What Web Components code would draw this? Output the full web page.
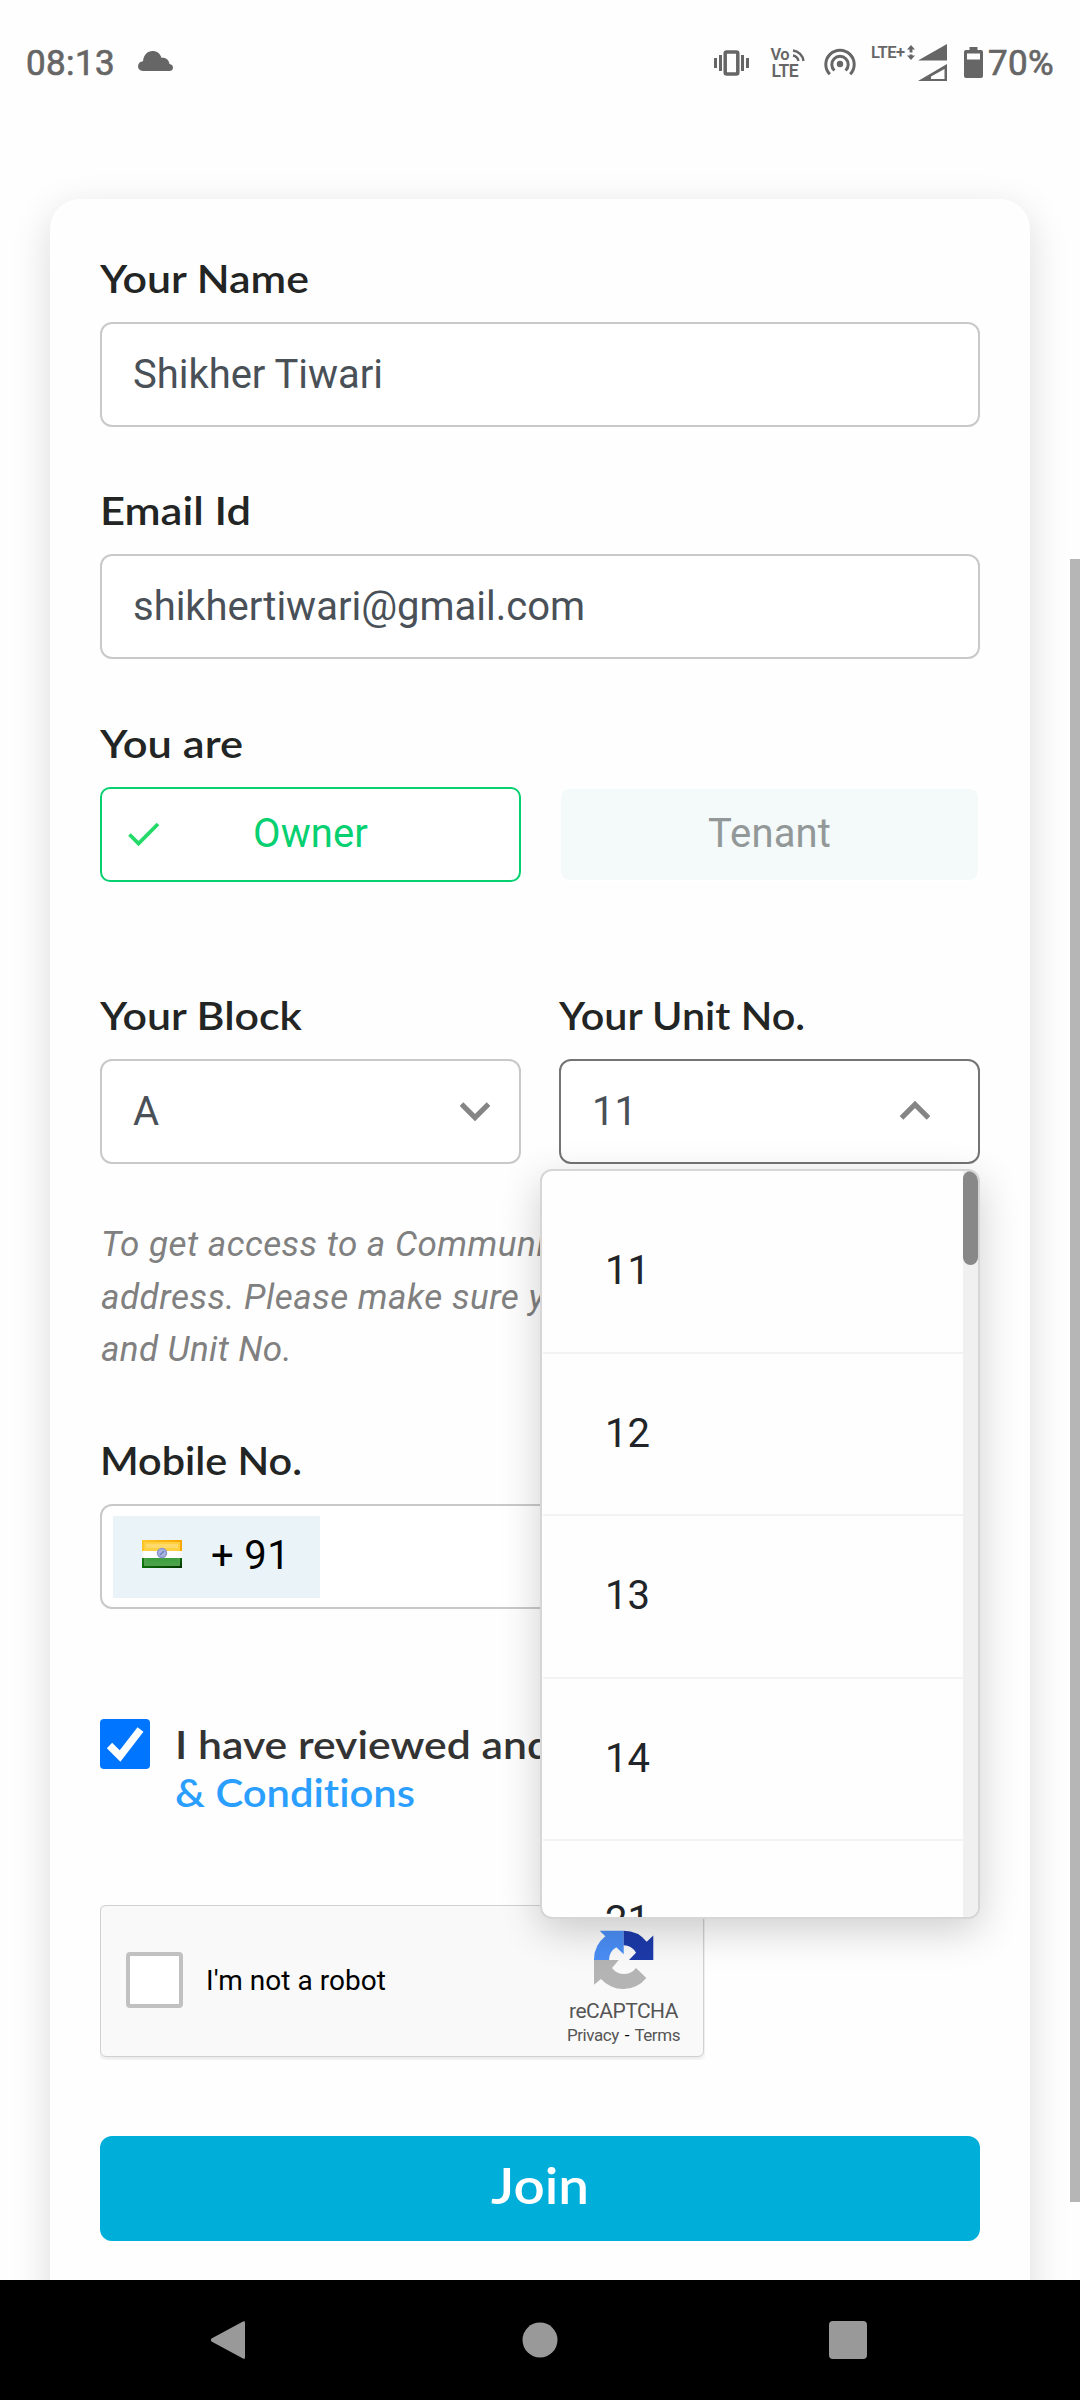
<!DOCTYPE html>
<html lang="en">
<head>
<meta charset="utf-8">
<title>Join</title>
<style>
html,body{margin:0;padding:0;background:#fefefe;width:1080px;height:2400px;overflow:hidden;font-family:Roboto,sans-serif}
</style>
</head>
<body>
<join-screen></join-screen>
<script>
const define=(name,html,init)=>{
  const t=document.createElement('template');t.innerHTML=html;
  customElements.define(name,class extends HTMLElement{
    constructor(){super();this.attachShadow({mode:'open'}).append(t.content.cloneNode(true));}
    connectedCallback(){if(init)init(this,this.shadowRoot);}
  });
};

/* One line of text that fills the width in "w": by tracking, or by widening its letters when "stretch" is set. */
define('fit-text',`<style>:host{display:inline-block;white-space:pre;font-variant-ligatures:none}span{display:inline-block;transform-origin:0 50%}</style><span><slot></slot></span>`,(el,r)=>{
  const s=r.querySelector('span'),w=parseFloat(el.getAttribute('w')),n=el.textContent.length;
  if(!w||n<2)return;
  const k=s.getBoundingClientRect().width;
  if(el.hasAttribute('stretch')){el.style.width=w+'px';s.style.transform='scaleX('+(w/k).toFixed(4)+')';}
  else s.style.letterSpacing=((w-k)/n).toFixed(3)+'px';
});

define('status-bar',`<style>
:host{display:flex;height:126px;box-sizing:border-box;padding:0 26px 0 26px;align-items:flex-start;color:#666;fill:#666}
.time{font:400 35px/42px Roboto;margin-top:43px;height:42px;-webkit-text-stroke:.7px #666}
svg{display:block;flex:none;overflow:visible}
.sp{flex:1}
text{font-family:Roboto,sans-serif;font-weight:600}
</style>
<div class="time"><fit-text w="89">08:13</fit-text></div>
<svg style="margin:51px 0 0 23px" width="35" height="20" viewBox="0 0 35 20"><path d="M5 20C1.800 20 0 18 0 15.300C0 12.500 2 10.500 5 10.200C5.500 4 9.500 0 14.500 0C19 0 22.200 2.700 23.500 6.800C28 6.300 31 9 31.500 13C33.800 13.300 35 14.700 35 16.700C35 18.700 33.500 20 31.300 20Z"/></svg>
<div class="sp"></div>
<svg style="margin-top:50px" width="35" height="26" viewBox="0 0 35 26"><path d="M0 8h3v10H0zM5 5h3v16H5zM27 5h3v16h-3zM32 8h3v10h-3z"/><rect x="11.200" y="2" width="12.600" height="22" rx="1.500" fill="none" stroke="#666" stroke-width="3.500"/></svg>
<svg style="margin:46px 0 0 22px" width="34" height="34" viewBox="0 0 34 34"><text x="-.5" y="14" font-size="16.500" textLength="19">Vo</text><text x=".5" y="31.300" font-size="17.500" textLength="27">LTE</text><path d="M22 4.500A12 12 0 0 1 32.500 15M22 9.500A7 7 0 0 1 27.500 15" fill="none" stroke="#666" stroke-width="2.400"/></svg>
<svg style="margin:48px 0 0 19px" width="32" height="32" viewBox="0 0 32 32"><circle cx="16" cy="16" r="3.200"/><g fill="none" stroke="#666" stroke-width="3"><path d="M10.400 22.500A8.200 8.200 0 1 1 21.600 22.500M5.800 26.300A14.200 14.200 0 1 1 26.200 26.300"/></g></svg>
<svg style="margin:44px 0 0 15px" width="76" height="37" viewBox="0 0 76 37"><text x="0" y="14" font-size="16.500" textLength="34">LTE+</text><path d="M40 1l4 4.500h-2.600v3h-2.800v-3H36zM40 16l4-4.500h-2.600v-1h-2.800v1H36z"/><path d="M76 0v16.500H47zM76 20v17H47zM73.500 25L60 32.500V35h13.500z" fill-rule="evenodd"/></svg>
<svg style="margin:47px 0 0 17px" width="19" height="31" viewBox="0 0 19 31"><path fill-rule="evenodd" d="M5.500 0h8v3H17q2 0 2 2v24q0 2-2 2H2q-2 0-2-2V5q0-2 2-2h3.500zM3 6.500v6h13v-6z"/></svg>
<div class="time" style="margin-left:5px"><fit-text w="66">70%</fit-text></div>`);

define('field-label',`<style>:host{display:block;height:48px;margin-bottom:21px;font:600 38.500px/51px Lato,sans-serif;color:#222524;white-space:nowrap}</style><slot></slot>`);

define('text-field',`<style>
:host{display:flex;align-items:center;box-sizing:border-box;height:105px;border:2px solid #c9c9c9;border-radius:12px;padding:0 32px 0 31px;font:400 40px/101px Roboto,sans-serif;color:#495057;background:#fff}
:host([active]){border-color:#747474}
:host([phone]){padding:1px 11px 0}
</style><slot></slot>`);

define('chevron-icon',`<style>:host{display:block;margin:1px -3px 0 auto;width:30px;height:20px}:host([up]){transform:rotate(180deg);margin:-3px 16px 0 auto}svg{display:block}</style>
<svg width="30" height="20" viewBox="0 0 30 20"><path d="M1.500 2L15 15.500L28.500 2" fill="none" stroke="#858585" stroke-width="5.200"/></svg>`);

define('role-option',`<style>
:host{display:flex;flex:1;box-sizing:border-box;height:95px;border:2px solid #fff;border-radius:10px;align-items:center;justify-content:center;font:400 40px/91px Roboto,sans-serif;color:#929898;background:#f4f9f9;background-clip:padding-box;position:relative;padding-bottom:2px}
:host([checked]){border-color:#06d06f;background:#fff;color:#06d06f}
svg{display:none;position:absolute;left:26px;top:33px}
:host([checked]) svg{display:block}
</style><svg width="32" height="25" viewBox="0 0 32 25"><path d="M1.500 12.500L10.500 21.500L30 2" fill="none" stroke="#23da68" stroke-width="3.800"/></svg><slot></slot>`);

define('dial-code',`<style>:host{display:flex;width:207px;height:82px;background:#eaf3f7;box-sizing:border-box;padding:0 0 0 29px;align-items:center;color:#000;font:400 40px/82px Roboto,sans-serif}svg{display:block;margin:-6px 29px 0 0}fit-text{margin-top:-2px}</style>
<svg width="40" height="28" viewBox="0 0 40 28"><defs><linearGradient id="o" x2="1" y2="0"><stop stop-color="#ffc629"/><stop offset="1" stop-color="#f9a600"/></linearGradient><linearGradient id="g" x2="1" y2="1"><stop stop-color="#167f12"/><stop offset=".5" stop-color="#096b08"/><stop offset="1" stop-color="#033000"/></linearGradient><linearGradient id="h" x2="0" y2="1"><stop stop-color="#3f9c3e"/><stop offset="1" stop-color="#48a548"/></linearGradient></defs>
<rect width="40" height="11" fill="url(#o)"/><rect x="2" y="2" width="36" height="9" fill="#ffd040"/><rect x="4" y="4" width="32" height="4" fill="#ffda6a"/><rect y="11" width="40" height="7" fill="#f7f7f7"/><rect x="2" y="11" width="36" height="7" fill="#fff"/><rect y="18" width="40" height="10" fill="url(#g)"/><rect x="2" y="18" width="36" height="8" fill="#4f9f4d"/><rect x="4" y="18" width="32" height="6" fill="url(#h)"/><circle cx="20" cy="13" r="4.500" fill="#a9b3dc" stroke="#8b98d0" stroke-width="1.500"/><path d="M18 15l4-4" stroke="#7080c4" stroke-width="1.500"/></svg>
<fit-text w="79">+ 91</fit-text>`);

define('consent-row',`<style>
:host{display:flex;height:96px;font:600 38.500px/47.500px Lato,sans-serif;color:#333;white-space:nowrap}
svg{display:block;flex:none;margin:0 25px 0 0}
a{color:#2b9fff}.t{padding-top:2px}.t div{height:48px}
</style><svg width="50" height="50" viewBox="0 0 50 50"><rect width="50" height="50" rx="4" fill="#0075ff"/><path d="M9.500 26.500L20 37L40.500 10.500" fill="none" stroke="#fff" stroke-width="7.500"/></svg>
<div class="t"><div><fit-text stretch w="376">I have reviewed and</fit-text></div><div><a><fit-text stretch w="240">&amp; Conditions</fit-text></a></div></div>`);

define('robot-check',`<style>
:host{display:block;width:605px;height:155px;overflow:hidden}
.b{display:flex;box-sizing:border-box;width:604px;height:152px;border:1.500px solid #d0d0d0;border-radius:6px;background:#f9f9f9;box-shadow:0 1px 5px 1px rgba(0,0,0,.1);color:#000}
.c{box-sizing:border-box;width:57px;height:56px;border:4px solid #c1c1c1;border-radius:4px;background:#fff;margin:46px 23px 0 25px}
.l{font:400 28px/40px Roboto;margin-top:55px}
.r{margin:24px 19.500px 0 auto;width:120px;display:flex;flex-direction:column;align-items:center;color:#555;white-space:nowrap}
.n{font:400 21px/26px Roboto;margin-top:8px;height:26px}.p{font:400 17px/20px Roboto;height:20px;margin-top:1px}
i{font-style:normal;color:#000;margin:0 2px}
</style><div class="b"><div class="c"></div><div class="l"><fit-text w="180">I'm not a robot</fit-text></div>
<div class="r"><svg width="60" height="60" viewBox="0 0 60 60"><path fill="#4a8df4" d="M5.700.7H29.700V24.300L22.300 17.300A15 15 0 0 0 15 30H0A30 30 0 0 1 11.300 6.300Z"/><path fill="#1c3aa9" d="M29.700.7A29.300 29.300 0 0 1 52.700 11.700L59.300 5.500V30H35L42 22.700A15 15 0 0 0 29.700 15.300Z"/><path fill="#b4b4b4" d="M0 30H24.700L18 38A15 15 0 0 0 42 38L52.300 48A29.500 29.500 0 0 1 7 49L0 54.700Z"/></svg>
<div class="n"><fit-text w="109">reCAPTCHA</fit-text></div><div class="p"><fit-text w="113">Privacy <i>-</i> Terms</fit-text></div></div></div>`);

define('unit-menu',`<style>
:host{display:flex;box-sizing:border-box;width:440px;height:750px;border:2px solid #d6d6d6;border-radius:12px;background:#fefefe;box-shadow:0 12px 40px rgba(0,0,0,.19);overflow:hidden;position:absolute;right:0;top:179px;z-index:3}
.list{flex:1;padding-left:1px;padding-top:20px;overflow:hidden}
.list div{box-sizing:border-box;height:162.500px;padding-left:62px;border-bottom:2.500px solid #f3f3f3;font:400 40px/160.500px Roboto;color:#212529}
.bar{width:15px;background:#f0f0f0}.bar b{display:block;height:94px;border-radius:7.500px;background:#888}
</style><div class="list"><div>11</div><div>12</div><div>13</div><div>14</div><div>21</div></div><div class="bar"><b></b></div>`);

define('join-button',`<style>:host{display:flex;height:105px;border-radius:12px;background:#00aeda;color:#fff;justify-content:center;font:600 50px/98px Lato,sans-serif}</style><fit-text stretch w="98">Join</fit-text>`);

define('form-card',`<style>
:host{display:flex;flex-direction:column;box-sizing:border-box;width:980px;height:2300px;flex:none;margin:73px 0 0 50px;border-radius:30px;background:#fefefe;box-shadow:0 12px 40px rgba(0,0,0,.14);padding:54px 50px 0}
.row{display:flex;gap:38px;position:relative}.row>div{flex:1;position:relative}
p{margin:55px 0 58px;height:158px;padding-left:1px;color:#808080;font:italic 400 35px/52.500px Roboto,sans-serif;white-space:nowrap}
p fit-text{display:block}
</style>
<field-label><fit-text stretch w="209">Your Name</fit-text></field-label>
<text-field><fit-text w="250">Shikher Tiwari</fit-text></text-field>
<field-label style="margin-top:58px"><fit-text stretch w="151">Email Id</fit-text></field-label>
<text-field><fit-text w="452">shikhertiwari@gmail.com</fit-text></text-field>
<field-label style="margin-top:59px"><fit-text stretch w="143">You are</fit-text></field-label>
<div class="row"><role-option checked><fit-text w="115">Owner</fit-text></role-option><role-option><fit-text w="123">Tenant</fit-text></role-option></div>
<div class="row" style="margin-top:108px">
<div><field-label><fit-text stretch w="202">Your Block</fit-text></field-label><text-field>A<chevron-icon></chevron-icon></text-field></div>
<div><field-label><fit-text stretch w="246">Your Unit No.</fit-text></field-label><text-field active>11<chevron-icon up></chevron-icon></text-field><unit-menu></unit-menu></div>
</div>
<p><fit-text w="444">To get access to a Communi</fit-text><fit-text w="444">address. Please make sure y</fit-text><fit-text w="191">and Unit No.</fit-text></p>
<field-label><fit-text stretch w="202">Mobile No.</fit-text></field-label>
<text-field phone><dial-code></dial-code></text-field>
<consent-row style="margin-top:110px"></consent-row>
<robot-check style="margin-top:90px"></robot-check>
<join-button style="margin-top:76px"></join-button>`);

define('nav-bar',`<style>:host{display:flex;height:120px;background:#000;align-items:center;box-sizing:border-box;padding:0 213px 0 210px;justify-content:space-between}</style>
<svg width="36" height="40" viewBox="0 0 36 40"><path d="M33 1.500L1.500 18.500Q0 20 1.500 21.500L33 38.500Q35 39.500 35 37.500V2.500Q35 .5 33 1.500Z" fill="#999"/></svg>
<svg width="40" height="36" viewBox="0 0 40 36"><circle cx="22" cy="18" r="17.500" fill="#999"/></svg>
<svg width="38" height="38" viewBox="0 0 38 38"><rect width="38" height="38" rx="4" fill="#999"/></svg>`);

define('join-screen',`<style>
:host{display:flex;flex-direction:column;width:1080px;height:2400px;overflow:hidden;background:#fefefe}
main{flex:1;min-height:0;overflow:hidden;position:relative;display:flex;justify-content:space-between}
.thumb{width:10px;height:1643px;background:#b6b6b6;margin-top:433px;flex:none}
status-bar,nav-bar{flex:none}
</style><status-bar></status-bar><main><form-card></form-card><div class="thumb"></div></main><nav-bar></nav-bar>`);
</script>
</body>
</html>
